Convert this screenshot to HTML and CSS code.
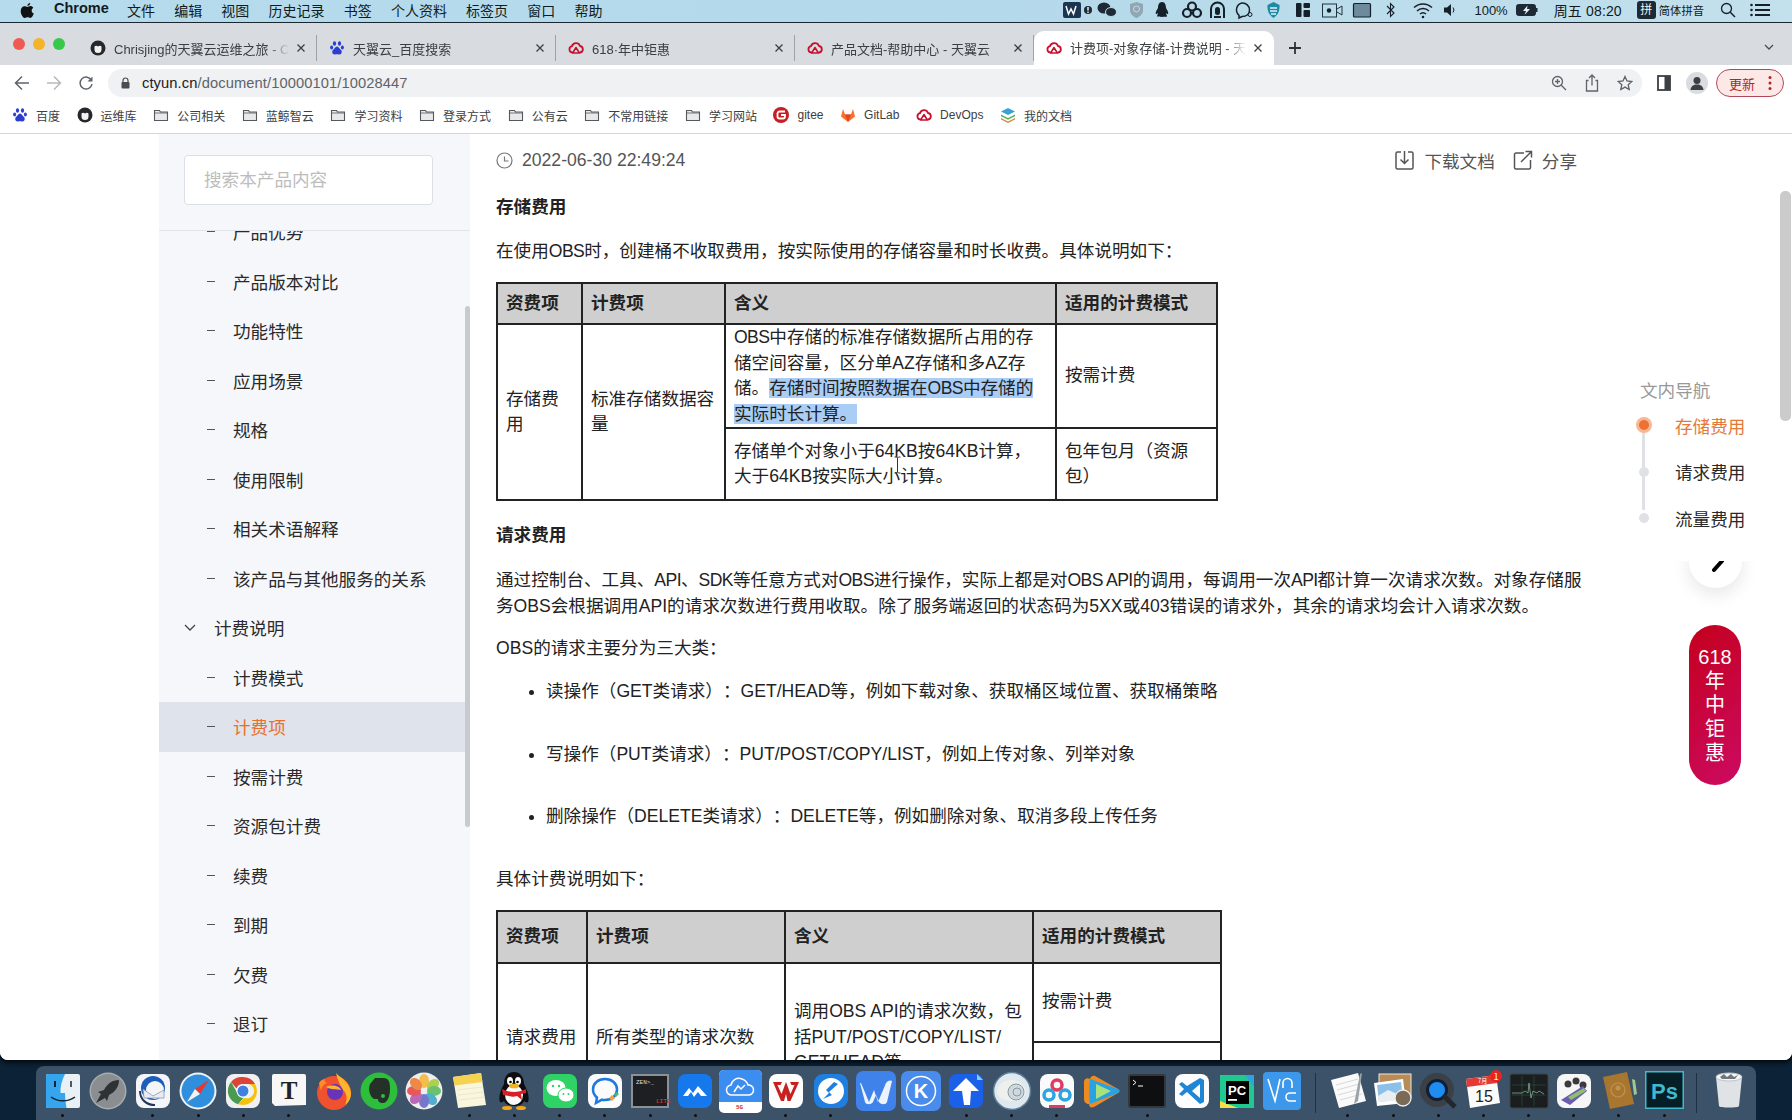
FILE: index.html
```html
<!DOCTYPE html>
<html lang="zh-CN">
<head>
<meta charset="utf-8">
<title>计费项-对象存储-计费说明 - 天翼云</title>
<link rel="stylesheet" href="styles.css">
</head>
<body>
<svg class="defs" aria-hidden="true">
  <symbol id="cloud" viewBox="0 0 16 16"><path d="M4.2 12.5A3.2 3.2 0 0 1 4 6.2 4.2 4.2 0 0 1 12 6a3.3 3.3 0 0 1 .2 6.5" fill="none" stroke="#c8102e" stroke-width="1.8" stroke-linecap="round"/><path d="M8 7.5l3.4 5.5H4.6z" fill="none" stroke="#c8102e" stroke-width="1.5" stroke-linejoin="round"/></symbol>
  <symbol id="folder" viewBox="0 0 16 16"><path d="M1.5 3.5h5l1 1.5h7v8.5h-13z" fill="#e8e9eb" stroke="#55585c" stroke-width="1.1"/><path d="M1.5 6h13" stroke="#55585c" stroke-width=".8"/></symbol>
  <symbol id="paw" viewBox="0 0 16 16"><g fill="#2a3fd0"><ellipse cx="5.5" cy="3.5" rx="1.6" ry="2.2"/><ellipse cx="10.5" cy="3.5" rx="1.6" ry="2.2"/><ellipse cx="2.6" cy="7.5" rx="1.5" ry="2"/><ellipse cx="13.4" cy="7.5" rx="1.5" ry="2"/><path d="M8 6.5c-2 0-2.4 2.5-4 3.6C2.400 11.500 3.500 15 6 14.500c1.200-.3 2.800-.3 4 0 2.500.5 3.600-3 2-4.400-1.600-1.100-2-3.600-4-3.600z"/></g></symbol>
  <symbol id="owl" viewBox="0 0 16 16"><circle cx="8" cy="8" r="7.500" fill="#26282c"/><path d="M4.500 6.500c1-1 2.300-1 3.500 0 1.200-1 2.500-1 3.500 0v3a3.500 3.500 0 0 1-7 0z" fill="#f3f3f3"/></symbol>
  <symbol id="cross" viewBox="0 0 12 12"><path d="M2.500 2.500l7 7m0-7l-7 7" stroke="#3c4043" stroke-width="1.300" fill="none"/></symbol>
</svg>

<header class="menubar">
  <svg class="apple" width="14" height="17" viewBox="0 0 14 17"><path d="M10.200 1c.1 1.200-1 2.900-2.800 2.900C7.300 2.500 8.700 1.100 10.200 1zM7.300 4.900c.8 0 1.700-.8 3.100-.8 1 0 2.200.5 2.900 1.600-2.400 1.500-2 4.700.5 5.800-.7 1.900-2 4.500-3.500 4.500-1 0-1.400-.7-2.700-.7s-1.700.7-2.700.7C3 16 .7 12.300.7 9.200.7 6 2.700 4.200 4.500 4.200c1.200 0 2 .7 2.800.7z" fill="#111"/></svg>
  <nav class="menu">
    <strong class="menu-app">Chrome</strong>
    <span>文件</span><span>编辑</span><span>视图</span><span>历史记录</span><span>书签</span><span>个人资料</span><span>标签页</span><span>窗口</span><span>帮助</span>
  </nav>
  <svg class="status-icons" width="406" height="22" viewBox="1060 0 406 22">
    <rect x="1066" y="3" width="18" height="16" rx="2" fill="#1b3550"/><path d="M1069 7l2.500 8 2.500-5 2.500 5 2.500-8" stroke="#fff" stroke-width="1.500" fill="none"/>
    <circle cx="1091" cy="11" r="4" fill="#1d2a35"/><rect x="1090.300" y="8" width="1.400" height="3.500" fill="#fff"/><rect x="1090.300" y="12.500" width="1.400" height="1.400" fill="#fff"/>
    <ellipse cx="1107" cy="9" rx="6.500" ry="5.500" fill="#1d2a35"/><ellipse cx="1114" cy="13" rx="5.500" ry="4.500" fill="#1d2a35" stroke="#bcdcea"/>
    <path d="M1133 5l6.500-2 6.500 2v6c0 4-3 6.500-6.500 8-3.500-1.500-6.500-4-6.500-8z" fill="#8fa6b3"/><circle cx="1139.500" cy="10" r="3" fill="none" stroke="#c6dae4"/>
    <path d="M1165 3c3 0 4 3 4 6 1 1.500 3 5 2 6-.7.300-1.400-.5-2-1 0 1.500 1 2 1 3.500 0 .5-10 .5-10 0 0-1.500 1-2 1-3.500-.6.500-1.300 1.300-2 1-1-1 1-4.500 2-6 0-3 1-6 4-6z" fill="#15202b"/>
    <g fill="none" stroke="#15202b" stroke-width="2.200"><circle cx="1195" cy="7.500" r="4"/><circle cx="1190" cy="14" r="4"/><circle cx="1200" cy="14" r="4"/></g>
    <path d="M1214 19v-9a6.500 6.500 0 0 1 13 0v9" fill="none" stroke="#15202b" stroke-width="2"/><rect x="1218" y="8" width="5" height="8" rx="2.500" fill="#15202b"/><rect x="1217" y="17" width="7" height="2" fill="#15202b"/>
    <path d="M1245 4a7 7 0 0 1 7.500 7c0 4-3 6.500-7.500 6.500l-3 1.500v-2.800a7 7 0 0 1 3-12.200z" fill="none" stroke="#15202b" stroke-width="1.500"/><circle cx="1253" cy="15.500" r="2" fill="none" stroke="#15202b"/>
    <path d="M1270.500 6l6-3 6 3c.5 6-1.500 10-6 13-4.500-3-6.500-7-6-13z" fill="#1c8ba5"/><path d="M1273 9h7m-7 3h7m-6 3h5" stroke="#e2f2f6" stroke-width="1.300"/>
    <rect x="1299" y="4" width="5.500" height="14" rx="1" fill="#15202b"/><rect x="1306.500" y="4" width="6.500" height="5" rx="1" fill="#15202b"/><rect x="1306.500" y="11" width="6.500" height="7" rx="1" fill="#15202b"/>
    <rect x="1325.500" y="5" width="14" height="13" fill="none" stroke="#22313e"/><circle cx="1332" cy="11.500" r="2.200" fill="#15202b"/><path d="M1340 10l5-3v9l-5-3" fill="none" stroke="#22313e"/>
    <rect x="1356.500" y="4.500" width="17" height="13.500" rx="1" fill="#6f8b9b" stroke="#15202b" stroke-width="1.200"/>
    <path d="M1390 7l7 7-3.500 3.500v-13L1397 8l-7 7" fill="none" stroke="#15202b" stroke-width="1.100"/>
    <g fill="none" stroke="#15202b" stroke-width="1.500"><path d="M1417 8.500a13 13 0 0 1 18 0"/><path d="M1420 12a8.500 8.500 0 0 1 12 0"/><path d="M1423 15a4.500 4.500 0 0 1 6 0"/></g><circle cx="1426" cy="18" r="1.300" fill="#15202b"/>
    <path d="M1447 8.500h3l4-3.500v12l-4-3.500h-3z" fill="#15202b"/><path d="M1456 8.500a4 4 0 0 1 0 5" stroke="#15202b" fill="none"/>
  </svg>
  <div class="status-text">
    <span class="battery-pct">100%</span>
    <svg width="22" height="12" viewBox="0 0 22 12"><rect x=".5" y=".5" width="19" height="11" rx="2" fill="#1d2a35" stroke="#1d2a35"/><path d="M11.500 1.500L7 7h3l-1.500 4L14 5h-3z" fill="#e4f1f6"/><rect x="20" y="4" width="1.500" height="4" fill="#1d2a35"/></svg>
    <span class="clock">周五 08:20</span>
    <span class="ime-box">拼</span>
    <span class="ime-name">简体拼音</span>
    <svg class="status-search" width="16" height="16" viewBox="0 0 16 16"><circle cx="6.500" cy="6.500" r="5" fill="none" stroke="#15202b" stroke-width="1.300"/><path d="M10.300 10.300l4.700 4.700" stroke="#15202b" stroke-width="1.500"/></svg>
    <svg width="20" height="14" viewBox="0 0 20 14"><g fill="#15202b"><circle cx="1.500" cy="2" r="1.300"/><circle cx="1.500" cy="7" r="1.300"/><circle cx="1.500" cy="12" r="1.300"/><rect x="5" y="1" width="15" height="2"/><rect x="5" y="6" width="15" height="2"/><rect x="5" y="11" width="15" height="2"/></g></svg>
  </div>
</header>

<div class="window">
  <div class="tabstrip">
    <div class="lights"><i class="light light-r"></i><i class="light light-y"></i><i class="light light-g"></i></div>
    <div class="tab"><svg class="fav"><use href="#owl"/></svg><span class="tab-title">Chrisjing的天翼云运维之旅 - Chrisjing</span><svg class="close"><use href="#cross"/></svg></div>
    <div class="tab"><svg class="fav"><use href="#paw"/></svg><span class="tab-title">天翼云_百度搜索</span><svg class="close"><use href="#cross"/></svg></div>
    <div class="tab"><svg class="fav"><use href="#cloud"/></svg><span class="tab-title">618·年中钜惠</span><svg class="close"><use href="#cross"/></svg></div>
    <div class="tab"><svg class="fav"><use href="#cloud"/></svg><span class="tab-title">产品文档-帮助中心 - 天翼云</span><svg class="close"><use href="#cross"/></svg></div>
    <div class="tab tab-active"><svg class="fav"><use href="#cloud"/></svg><span class="tab-title">计费项-对象存储-计费说明 - 天翼云</span><svg class="close"><use href="#cross"/></svg></div>
    <svg class="newtab" width="14" height="14" viewBox="0 0 14 14"><path d="M7 1v12M1 7h12" stroke="#2f3235" stroke-width="1.800"/></svg>
    <svg class="tabmenu" width="10" height="6" viewBox="0 0 10 6"><path d="M1 1l4 4 4-4" stroke="#4a4d50" stroke-width="1.300" fill="none"/></svg>
  </div>

  <div class="toolbar">
    <svg class="tool" width="16" height="16" viewBox="0 0 16 16"><path d="M15 8H2m6-6.500L1.500 8 8 14.500" fill="none" stroke="#5f6368" stroke-width="1.500"/></svg>
    <svg class="tool" width="16" height="16" viewBox="0 0 16 16"><path d="M1 8h13M8 1.500L14.500 8 8 14.500" fill="none" stroke="#b6b9bc" stroke-width="1.500"/></svg>
    <svg class="tool" width="16" height="16" viewBox="0 0 16 16"><path d="M13.500 5.500A6 6 0 1 0 14 9" fill="none" stroke="#5f6368" stroke-width="1.500"/><path d="M14.500 1.500v5h-5z" fill="#5f6368"/></svg>
    <div class="omnibox">
      <svg width="9" height="12" viewBox="0 0 9 12"><path d="M2 5V3.500a2.500 2.500 0 0 1 5 0V5" fill="none" stroke="#4a4d50" stroke-width="1.200"/><rect x=".5" y="5" width="8" height="6.500" rx="1" fill="#4a4d50"/></svg>
      <span class="url"><span class="url-host">ctyun.cn</span>/document/10000101/10028447</span>
      <svg class="omni-zoom" width="16" height="16" viewBox="0 0 16 16"><circle cx="6.500" cy="6.500" r="5" fill="none" stroke="#5f6368" stroke-width="1.300"/><path d="M10.300 10.300L15 15M4 6.500h5M6.500 4v5" stroke="#5f6368" stroke-width="1.300"/></svg>
      <svg width="14" height="18" viewBox="0 0 14 18"><path d="M3.500 6.500H1.500v10.500h11V6.500h-2M7 11.500V1.500M4 4l3-3 3 3" fill="none" stroke="#5f6368" stroke-width="1.300"/></svg>
      <svg width="16" height="16" viewBox="0 0 16 16"><path d="M8 1.500l2 4.500 4.800.5-3.600 3.200 1 4.800L8 12.100 3.800 14.500l1-4.800L1.200 6.500 6 6z" fill="none" stroke="#5f6368" stroke-width="1.300"/></svg>
    </div>
    <svg class="panel-icon" width="14" height="16" viewBox="0 0 14 16"><rect x="1" y="1" width="12" height="14" fill="none" stroke="#3c4043" stroke-width="1.800"/><rect x="7.500" y="1" width="5.500" height="14" fill="#3c4043"/></svg>
    <svg class="avatar" width="22" height="22" viewBox="0 0 22 22"><circle cx="11" cy="11" r="11" fill="#dadce0"/><circle cx="11" cy="8.500" r="3.500" fill="#3c4043"/><path d="M4.500 18c.5-4 3-5.500 6.500-5.500s6 1.500 6.500 5.500z" fill="#3c4043"/></svg>
    <div class="update"><span>更新</span><svg width="4" height="16" viewBox="0 0 4 16"><g fill="#b3261e"><circle cx="2" cy="2.500" r="1.500"/><circle cx="2" cy="8" r="1.500"/><circle cx="2" cy="13.500" r="1.500"/></g></svg></div>
  </div>

  <div class="bookmarks">
    <a class="bm"><svg class="bm-i"><use href="#paw"/></svg>百度</a>
    <a class="bm"><svg class="bm-i"><use href="#owl"/></svg>运维库</a>
    <a class="bm"><svg class="bm-i"><use href="#folder"/></svg>公司相关</a>
    <a class="bm"><svg class="bm-i"><use href="#folder"/></svg>蓝鲸智云</a>
    <a class="bm"><svg class="bm-i"><use href="#folder"/></svg>学习资料</a>
    <a class="bm"><svg class="bm-i"><use href="#folder"/></svg>登录方式</a>
    <a class="bm"><svg class="bm-i"><use href="#folder"/></svg>公有云</a>
    <a class="bm"><svg class="bm-i"><use href="#folder"/></svg>不常用链接</a>
    <a class="bm"><svg class="bm-i"><use href="#folder"/></svg>学习网站</a>
    <a class="bm"><svg class="bm-i" viewBox="0 0 16 16"><circle cx="8" cy="8" r="8" fill="#c71d23"/><path d="M12 4.500H6.500a2 2 0 0 0-2 2v3a2 2 0 0 0 2 2H10a2 2 0 0 0 2-2V8H8" fill="none" stroke="#fff" stroke-width="1.800"/></svg>gitee</a>
    <a class="bm"><svg class="bm-i" viewBox="0 0 16 16"><path d="M8 15L1 9.500 3 2l2 5.500h6L13 2l2 7.500z" fill="#fc6d26"/><path d="M8 15L5 7.500h6z" fill="#e24329"/></svg>GitLab</a>
    <a class="bm"><svg class="bm-i"><use href="#cloud"/></svg>DevOps</a>
    <a class="bm"><svg class="bm-i" viewBox="0 0 16 16"><path d="M8 1l7 3.500L8 8 1 4.500z" fill="#3aa0d8"/><path d="M1 7.500L8 11l7-3.500v1.800L8 12.800 1 9.300z" fill="#58b368"/><path d="M1 11l7 3.500 7-3.500v1.500L8 16l-7-3.500z" fill="#e0853a"/></svg>我的文档</a>
  </div>

  <main class="page">
    <aside class="sidebar">
      <div class="search"><div class="search-box">搜索本产品内容</div></div>
      <div class="tree">
        <ul class="tree-list">
          <li class="leaf">产品优势</li>
          <li class="leaf">产品版本对比</li>
          <li class="leaf">功能特性</li>
          <li class="leaf">应用场景</li>
          <li class="leaf">规格</li>
          <li class="leaf">使用限制</li>
          <li class="leaf">相关术语解释</li>
          <li class="leaf">该产品与其他服务的关系</li>
          <li class="group"><svg width="12" height="8" viewBox="0 0 12 8"><path d="M1 1l5 5 5-5" fill="none" stroke="#444" stroke-width="1.300"/></svg>计费说明</li>
          <li class="leaf">计费模式</li>
          <li class="leaf leaf-active">计费项</li>
          <li class="leaf">按需计费</li>
          <li class="leaf">资源包计费</li>
          <li class="leaf">续费</li>
          <li class="leaf">到期</li>
          <li class="leaf">欠费</li>
          <li class="leaf">退订</li>
          <li class="leaf">&nbsp;</li>
        </ul>
        <div class="tree-thumb"></div>
      </div>
    </aside>

    <article class="doc">
      <div class="doc-meta">
        <svg width="17" height="17" viewBox="0 0 17 17"><circle cx="8.500" cy="8.500" r="7.500" fill="none" stroke="#777" stroke-width="1.200"/><path d="M8.500 4.500v4.500h4" fill="none" stroke="#777" stroke-width="1.200"/></svg>
        <span class="doc-date">2022-06-30 22:49:24</span>
        <span class="doc-action doc-action-first"><svg width="21" height="21" viewBox="0 0 21 21"><path d="M7 2H3.500a1.500 1.500 0 0 0-1.500 1.500v14A1.500 1.500 0 0 0 3.500 19h14a1.500 1.500 0 0 0 1.500-1.500v-14A1.500 1.500 0 0 0 17.500 2H14M10.500 1v12M6.500 9.500l4 4 4-4" fill="none" stroke="#555" stroke-width="1.500"/></svg>下载文档</span>
        <span class="doc-action"><svg width="20" height="21" viewBox="0 0 20 21"><path d="M11 3H3a1.500 1.500 0 0 0-1.500 1.500v13A1.500 1.500 0 0 0 3 19h13a1.500 1.500 0 0 0 1.500-1.500V10M8 12L18.500 1.500M12.500 1.500h6v6" fill="none" stroke="#555" stroke-width="1.500"/></svg>分享</span>
      </div>

      <h3 class="doc-h">存储费用</h3>
      <p class="doc-p">在使用<span class="lat">OBS</span>时，创建桶不收取费用，按实际使用的存储容量和时长收费。具体说明如下：</p>

      <table class="grid grid-a">
        <colgroup><col class="a1"><col class="a2"><col class="a3"><col class="a4"></colgroup>
        <thead><tr><th>资费项</th><th>计费项</th><th>含义</th><th>适用的计费模式</th></tr></thead>
        <tbody>
          <tr class="a-r1">
            <td rowspan="2">存储费<br>用</td>
            <td rowspan="2">标准存储数据容<br>量</td>
            <td><span class="lat">OBS</span>中存储的标准存储数据所占用的存<br>储空间容量，区分单AZ存储和多AZ存<br>储。<span class="sel">存储时间按照数据在<span class="lat">OBS</span>中存储的<br>实际时长计算。</span></td>
            <td>按需计费</td>
          </tr>
          <tr class="a-r2">
            <td>存储单个对象小于64KB按64KB计算，<br>大于64KB按实际大小计算。</td>
            <td>包年包月（资源<br>包）</td>
          </tr>
        </tbody>
      </table>

      <h3 class="doc-h doc-h-second">请求费用</h3>
      <p class="doc-p doc-p-wrap">通过控制台、工具、<span class="lat">API</span>、<span class="lat">SDK</span>等任意方式对<span class="lat">OBS</span>进行操作，实际上都是对<span class="lat">OBS API</span>的调用，每调用一次<span class="lat">API</span>都计算一次请求次数。对象存储服<br>务OBS会根据调用API的请求次数进行费用收取。除了服务端返回的状态码为5XX或403错误的请求外，其余的请求均会计入请求次数。</p>
      <p class="doc-p doc-p-tight">OBS的请求主要分为三大类：</p>
      <ul class="doc-list">
        <li>读操作（GET类请求）：GET/HEAD等，例如下载对象、获取桶区域位置、获取桶策略</li>
        <li>写操作（PUT类请求）：PUT/POST/COPY/LIST，例如上传对象、列举对象</li>
        <li>删除操作（DELETE类请求）：DELETE等，例如删除对象、取消多段上传任务</li>
      </ul>
      <p class="doc-p doc-p-last">具体计费说明如下：</p>

      <table class="grid grid-b">
        <colgroup><col class="b1"><col class="b2"><col class="b3"><col class="b4"></colgroup>
        <thead><tr><th>资费项</th><th>计费项</th><th>含义</th><th>适用的计费模式</th></tr></thead>
        <tbody>
          <tr class="b-r1">
            <td rowspan="2">请求费用</td>
            <td rowspan="2">所有类型的请求次数</td>
            <td rowspan="2">调用OBS API的请求次数，包<br>括PUT/POST/COPY/LIST/<br>GET/HEAD等</td>
            <td>按需计费</td>
          </tr>
          <tr class="b-r2"><td>包年包月</td></tr>
        </tbody>
      </table>
    </article>

    <div class="float-circle"><svg width="18" height="30" viewBox="0 0 18 30"><path d="M15 2l-8 9" stroke="#000" stroke-width="4" stroke-linecap="round" fill="none"/></svg></div>
    <aside class="toc">
      <div class="toc-title">文内导航</div>
      <ul class="toc-list">
        <li class="toc-item toc-on"><i class="toc-dot"></i>存储费用</li>
        <li class="toc-item"><i class="toc-dot"></i>请求费用</li>
        <li class="toc-item"><i class="toc-dot"></i>流量费用</li>
      </ul>
    </aside>
    <div class="promo"><span>618</span><span>年</span><span>中</span><span>钜</span><span>惠</span></div>
    <div class="page-thumb"></div>
    <svg class="ibeam" width="9" height="18" viewBox="0 0 9 18"><path d="M1.500 1h2l1 1 1-1h2M4.500 2v14M1.500 17h2l1-1 1 1h2" fill="none" stroke="#333" stroke-width="1"/></svg>
  </main>
</div>

<footer class="dock">
  <div class="dk on"><svg viewBox="0 0 40 40"><rect x="3" y="3" width="34" height="34" rx="2" fill="#e9f0f6"/><path d="M3 5a2 2 0 0 1 2-2h17c-3 6-5 13-4.500 19H22c0 5 .5 10 1.500 15H5a2 2 0 0 1-2-2z" fill="#35a5ee"/><rect x="11" y="10" width="2" height="6" fill="#123"/><rect x="27" y="10" width="2" height="6" fill="#556"/><path d="M8 26c7 5 17 5 24 0" stroke="#123" stroke-width="1.500" fill="none"/></svg><i></i></div>
  <div class="dk"><svg viewBox="0 0 40 40"><circle cx="20" cy="20" r="18.500" fill="#a9adb0"/><circle cx="20" cy="20" r="17" fill="#8a8e90"/><path d="M31 9c-7 0-12 4-15 10l-6 2 3 2-5 9 9-5 2 3 2-6c6-3 10-8 10-15z" fill="#2f3234"/></svg></div>
  <div class="dk on"><svg viewBox="0 0 40 40"><rect x="3" y="3" width="34" height="34" rx="8" fill="#f4f5f8"/><circle cx="20" cy="17" r="12" fill="#1d5fb8"/><circle cx="22" cy="19" r="9" fill="#f4f5f8"/><path d="M10 18l10 7 11-6v8H11z" fill="#e8ebf2" stroke="#7c8aa0" stroke-width=".7"/><path d="M7 20c0 9 7 14 15 14" stroke="#24345c" stroke-width="2" fill="none"/></svg><i></i></div>
  <div class="dk on"><svg viewBox="0 0 40 40"><circle cx="20" cy="20" r="18.500" fill="#f0f3f6"/><circle cx="20" cy="20" r="16.500" fill="#2f8fdc"/><path d="M31 9L17 18l5 5z" fill="#e6382f"/><path d="M9 31l8-13 5 5z" fill="#f2f2f2"/></svg><i></i></div>
  <div class="dk on"><svg viewBox="0 0 40 40"><rect x="3" y="3" width="34" height="34" rx="8" fill="#f0f0f0"/><path d="M20 6a14 14 0 0 1 12.100 7H20a7 7 0 0 0-6.500 4.400L8 11a14 14 0 0 1 12-5z" fill="#db4437"/><path d="M8 11l6 10.500a7 7 0 0 0 6.500 5.500L15 33.300A14 14 0 0 1 8 11z" fill="#4a9b4f"/><path d="M32.100 13A14 14 0 0 1 20 34l-5-.700 6.200-6.400a7 7 0 0 0 5-13.900z" fill="#f4c20d"/><circle cx="20" cy="20" r="6.500" fill="#fff"/><circle cx="20" cy="20" r="5.500" fill="#3f7fe0"/></svg><i></i></div>
  <div class="dk on"><svg viewBox="0 0 40 40"><path d="M6 35l31-1V5a2 2 0 0 0-2-2H5a2 2 0 0 0-2 2v27z" fill="#f7f7f7"/><text x="20" y="28" class="dk-serif">T</text></svg><i></i></div>
  <div class="dk"><svg viewBox="0 0 40 40"><circle cx="20" cy="22" r="17" fill="#f0512f"/><path d="M22 2c3 4 14 8 15 20 0 6-3 10-6 12 3-6 2-13-4-17-1-5-4-9-5-15z" fill="#fcb52a"/><path d="M5 12c2-3 4-4 6-4-1 2 0 3 2 4-3 1-5 3-6 8z" fill="#ff8a26"/><circle cx="21" cy="21" r="8" fill="#6a34b8"/><path d="M12 16c6-3 14-1 15 3-5-1-10 0-15-3z" fill="#f8b432"/></svg></div>
  <div class="dk"><svg viewBox="0 0 40 40"><circle cx="20" cy="20" r="18.500" fill="#2dbe3c"/><path d="M11 13l5-6h8c6 0 7 4 7 11 0 8-3 14-7 14-4 0-5-2-5-4h-3c-4 0-6-7-6-11z" fill="#243028"/><circle cx="24" cy="25" r="2" fill="#2dbe3c"/></svg></div>
  <div class="dk"><svg viewBox="0 0 40 40"><circle cx="20" cy="20" r="18.500" fill="#eeeef0"/><g opacity=".9"><ellipse cx="20" cy="10" rx="5" ry="7" fill="#f4b93a"/><ellipse cx="29" cy="14" rx="5" ry="7" fill="#a6ce3a" transform="rotate(45 29 14)"/><ellipse cx="30" cy="20" rx="7" ry="5" fill="#5fbd5f"/><ellipse cx="27" cy="28" rx="5" ry="7" fill="#3fa9c9" transform="rotate(-45 27 28)"/><ellipse cx="20" cy="30" rx="5" ry="7" fill="#6a6ac6"/><ellipse cx="12" cy="27" rx="5" ry="7" fill="#b65bb1" transform="rotate(45 12 27)"/><ellipse cx="10" cy="20" rx="7" ry="5" fill="#e8474c"/><ellipse cx="12" cy="13" rx="5" ry="7" fill="#ef7d34" transform="rotate(-45 12 13)"/></g></svg></div>
  <div class="dk on"><svg viewBox="0 0 40 40"><path d="M4 6l28-4 5 32-28 3z" fill="#faf6dd"/><path d="M4 6l28-4 1.500 9-28 3.500z" fill="#f5d252"/><path d="M8 19l26-3M9 24l26-3M10 29l26-3" stroke="#e4e0c4" stroke-width=".7"/></svg><i></i></div>
  <div class="dk on"><svg viewBox="0 0 40 40"><path d="M20 1c7 0 10 6 10 12 3 5 6 13 4 18-1 1-3 0-4-1-1 3-5 5-10 5s-9-2-10-5c-1 1-3 2-4 1-2-5 1-13 4-18 0-6 3-12 10-12z" fill="#0e0e10"/><ellipse cx="20" cy="24" rx="9" ry="10" fill="#fafafa"/><ellipse cx="16" cy="10" rx="3" ry="4" fill="#fff"/><ellipse cx="24" cy="10" rx="3" ry="4" fill="#fff"/><circle cx="16.500" cy="11" r="1.300" fill="#000"/><circle cx="23.500" cy="11" r="1.300" fill="#000"/><ellipse cx="20" cy="15" rx="5" ry="2.300" fill="#f3b21d"/><path d="M8 18c8 4 16 4 24 0v4l-5 1 1 6-5-4c-3 1-5 1-8 0l-6-1z" fill="#d61f26"/><ellipse cx="13" cy="37" rx="5" ry="2" fill="#f2a71b"/><ellipse cx="27" cy="37" rx="5" ry="2" fill="#f2a71b"/></svg><i></i></div>
  <div class="dk on"><svg viewBox="0 0 40 40"><rect x="3" y="3" width="34" height="34" rx="8" fill="#2fd365"/><ellipse cx="16" cy="17" rx="9.500" ry="8" fill="#fff"/><ellipse cx="26" cy="24" rx="8" ry="7" fill="#fff" stroke="#2fd365"/><circle cx="13" cy="15" r="1.200" fill="#2fd365"/><circle cx="19" cy="15" r="1.200" fill="#2fd365"/><circle cx="23.500" cy="23" r="1" fill="#2fd365"/><circle cx="28.500" cy="23" r="1" fill="#2fd365"/></svg><i></i></div>
  <div class="dk on"><svg viewBox="0 0 40 40"><rect x="3" y="3" width="34" height="34" rx="8" fill="#fbfbfc"/><path d="M20 8c7 0 12 4.500 12 10.500S27 29 20 29c-1 0-2 0-3-.3L11 32l1-5.500C9.500 24.500 8 22 8 18.500 8 12.500 13 8 20 8z" fill="none" stroke="#1f78e0" stroke-width="2.500"/><path d="M24 27l3-3 3 3-3 3z" fill="#f0a23b"/><path d="M29 24l3-3 2 2-3 3z" fill="#3fbf6b"/></svg><i></i></div>
  <div class="dk on"><svg viewBox="0 0 40 40"><rect x="1" y="3" width="38" height="34" fill="#8b9196"/><rect x="3" y="5" width="34" height="30" fill="#1d1f22"/><text x="6" y="13" class="dk-tiny">ZEN&gt;_</text><text x="26" y="32" class="dk-tiny dk-tiny-red">LITE</text></svg><i></i></div>
  <div class="dk on"><svg viewBox="0 0 40 40"><rect x="3" y="3" width="34" height="34" rx="8" fill="#1578ec"/><path d="M8 25l6-8 4 5 5-7 9 10h-6l-3-4-4 5-3-5-3 4z" fill="#fff"/></svg><i></i></div>
  <div class="dk"><svg viewBox="0 0 40 40"><rect x="-1" y="-1" width="43" height="43" rx="5" fill="#fff"/><path d="M-1 4a5 5 0 0 1 5-5h33a5 5 0 0 1 5 5v27h-43z" fill="#3b8def"/><path d="M12 24a5 5 0 0 1-1-10c1-5 6-8 11-6 3 1 5 3 6 6a5 5 0 0 1 1 10z" fill="none" stroke="#fff" stroke-width="1.500"/><path d="M14 21l4-6 3 3 4-4" stroke="#fff" stroke-width="1.500" fill="none"/><text x="16" y="38" class="dk-tiny dk-tiny-red">5G</text></svg></div>
  <div class="dk on"><svg viewBox="0 0 40 40"><rect x="3" y="3" width="34" height="34" rx="8" fill="#fdfdfd"/><path d="M7 11h9l-1.500 3h-3l4 9 4.500-12 4.500 12 4-9h-3L24 11h9l-8.500 19h-3L20 23l-2 7h-3z" fill="#c8201f"/></svg><i></i></div>
  <div class="dk on"><svg viewBox="0 0 40 40"><rect x="3" y="3" width="34" height="34" rx="9" fill="#1e7fe0"/><circle cx="20" cy="20" r="13" fill="#fff"/><path d="M23 11l-8 8 3 3-6 6 9-4-3-3 9-8z" fill="#1e7fe0"/></svg><i></i></div>
  <div class="dk"><svg viewBox="0 0 40 40"><rect y="0" width="40" height="40" rx="7" fill="#3f83ea"/><path d="M5 12l8 19 5-12 4 12 8-19c2-3 5-3 6-2l-5 21c-1 3-6 3-8 0l-3-7-3 7c-2 3-7 3-8 0L4 12z" fill="#fff" opacity=".9"/></svg></div>
  <div class="dk"><svg viewBox="0 0 40 40"><rect y="0" width="40" height="40" rx="7" fill="#4a8ceb"/><circle cx="20" cy="20" r="14.500" fill="none" stroke="#fff" stroke-width="1.500"/><text x="20" y="27" class="dk-bold">K</text></svg></div>
  <div class="dk on"><svg viewBox="0 0 40 40"><rect x="3" y="3" width="34" height="34" rx="7" fill="#1a60e8"/><path d="M31 3l6 6h-6z" fill="#7fd0f3"/><path d="M20 7L33 20h-8l-1 14h-6l-2-14H7z" fill="#fff"/></svg><i></i></div>
  <div class="dk on"><svg viewBox="0 0 40 40"><circle cx="20" cy="20" r="18.500" fill="#dfe8ef" stroke="#5a7d99" stroke-width="1.500"/><path d="M5 22c0-9 7-13 14-13s15 5 15 13c-4 8-8 8-13 8C13 30 7 28 5 22z" fill="#eef0ee"/><circle cx="24" cy="21" r="8" fill="#cfd8dc" stroke="#8a9aa4"/><circle cx="25" cy="21" r="4" fill="none" stroke="#8a9aa4"/></svg><i></i></div>
  <div class="dk on"><svg viewBox="0 0 40 40"><rect x="3" y="3" width="34" height="34" rx="8" fill="#fafafa"/><g fill="none" stroke-width="3.500"><circle cx="20" cy="14" r="5" stroke="#e33a5f"/><circle cx="12" cy="24" r="5" stroke="#2da5e0"/><circle cx="28" cy="24" r="5" stroke="#2da5e0"/></g><rect x="12" y="34" width="16" height="3" fill="#e33a5f"/></svg><i></i></div>
  <div class="dk"><svg viewBox="0 0 40 40"><path d="M2 11c0-3 3-5 6-3 0-2 3-4 5-3l23 13c2 1 2 3 0 4L12 36c-3 1-5 0-5-3-3 0-5-2-5-5z" fill="#ee8a20"/><path d="M8 8l28 10c2 1 2 3 0 4L8 33c-1-8-1-17 0-25z" fill="#27a3e3"/><path d="M14 13l15 7-15 8z" fill="#a9e27c"/></svg></div>
  <div class="dk on"><svg viewBox="0 0 40 40"><rect x="1" y="3" width="38" height="34" rx="3" fill="#34373b"/><rect x="3" y="5" width="34" height="30" rx="1" fill="#0e0f11"/><path d="M6 9l3 2.500-3 2.500" stroke="#fff" fill="none"/><path d="M11 15h5" stroke="#fff"/></svg><i></i></div>
  <div class="dk"><svg viewBox="0 0 40 40"><rect x="3" y="3" width="34" height="34" rx="8" fill="#fdfdfd"/><path d="M28 7l4 2v22l-4 2-13-12-5 4-3-2 5-5-5-5 3-2 5 4z" fill="#1f86d6"/><path d="M28 13l-8 7 8 7z" fill="#fdfdfd"/></svg></div>
  <div class="dk"><svg viewBox="0 0 40 40"><rect x="3" y="4" width="34" height="33" fill="#1fc98f"/><path d="M28 4h9v12z" fill="#2fa3dd"/><path d="M3 30v7h18z" fill="#f3e04a"/><rect x="9" y="10" width="23" height="23" fill="#000"/><text x="11" y="24" class="dk-pc">PC</text><rect x="11" y="28" width="9" height="1.800" fill="#fff"/></svg></div>
  <div class="dk"><svg viewBox="0 0 40 40"><rect y="1" width="38" height="38" rx="4" fill="#3d97ea"/><path d="M5 8l7 22 5-22" fill="none" stroke="#fff" stroke-width="1.600"/><path d="M20 17v-5a4.500 4.500 0 0 1 9 0v5M33 22h-6a4 4 0 0 0 0 8h6" fill="none" stroke="#fff" stroke-width="1.600"/></svg></div>
  <div class="dk-sep"><span></span></div>
  <div class="dk on"><svg viewBox="0 0 40 40"><path d="M3 9L30 2l8 28-27 7z" fill="#fafafa"/><path d="M8 14l22-6M9 19l22-6M10 24l22-6M12 29l22-6" stroke="#c9c9c9" stroke-width=".7"/><path d="M32 3l2-1-4 28 -4 3z" fill="#9aa3a8"/></svg><i></i></div>
  <div class="dk on"><svg viewBox="0 0 40 40"><rect x="6" y="3" width="32" height="24" fill="#b88c58" stroke="#efe6d8"/><path d="M1 12L30 8l3 24-29 3z" fill="#fff"/><path d="M4 14l24-3 2 17-24 3z" fill="#8cc0e8"/><path d="M5 25l10-6 14 6 1 4-24 2z" fill="#e8eef2"/><circle cx="30" cy="27" r="8" fill="#7b6a55" stroke="#eee" stroke-width="1.300"/></svg><i></i></div>
  <div class="dk on"><svg viewBox="0 0 40 40"><circle cx="19" cy="19" r="17" fill="#3a4045"/><circle cx="19" cy="19" r="9.500" fill="#1f8df0" stroke="#0e1e36" stroke-width="3"/><path d="M25 24l12 12" stroke="#22272b" stroke-width="5"/></svg><i></i></div>
  <div class="dk on"><svg viewBox="0 0 40 40"><path d="M3 8l30-4 4 28-30 5z" fill="#fbfbfb"/><path d="M3 8l30-4 1 8-30 4z" fill="#e23b34"/><text x="15" y="12" class="dk-tiny dk-tiny-white">7月</text><text x="21" y="31" class="dk-num">15</text><circle cx="33" cy="5" r="6" fill="#e5261f"/><text x="33" y="8.500" class="dk-tiny dk-tiny-white dk-mid">1</text></svg><i></i></div>
  <div class="dk on"><svg viewBox="0 0 40 40"><rect x="1" y="3" width="38" height="34" rx="2" fill="#1b1e1f" stroke="#3d4244"/><path d="M3 14h34M3 24h34M13 5v30M25 5v30" stroke="#2f4a3c" stroke-width=".7"/><path d="M3 22h10l3-2 3 2 1-10 2 15 2-7 4 2 2-2 5 3" stroke="#7fae90" fill="none" stroke-width=".8"/></svg><i></i></div>
  <div class="dk on"><svg viewBox="0 0 40 40"><rect x="3" y="3" width="34" height="34" rx="8" fill="#f6f6f6"/><circle cx="14" cy="13" r="3.500" fill="#3a3a3e"/><circle cx="22" cy="10" r="3.500" fill="#3a3a3e"/><circle cx="29" cy="14" r="3.500" fill="#3a3a3e"/><path d="M7 29l22-14 4 5-17 14z" fill="#6b5cb0"/><path d="M14 26l16-9 2 3-15 9z" fill="#8ec06c"/></svg><i></i></div>
  <div class="dk on"><svg viewBox="0 0 40 40"><path d="M4 6L28 1l7 32-24 5z" fill="#a9762f"/><circle cx="19" cy="19" r="7" fill="none" stroke="#c09450" stroke-width="1.200"/><circle cx="19" cy="17" r="2.500" fill="#c09450"/><path d="M33 8l3 1 2 14-3 1z" fill="#9fc88a"/></svg><i></i></div>
  <div class="dk on"><svg viewBox="0 0 40 40"><rect x="1" y="0" width="39" height="38" fill="#3fb9d0"/><rect x="2.500" y="1.500" width="36" height="35" fill="#061e26"/><text x="20.500" y="28" class="dk-ps">Ps</text></svg><i></i></div>
  <div class="dk-sep"><span></span></div>
  <div class="dk"><svg viewBox="0 0 40 40"><path d="M7 6h26l-3 29c0 2-20 2-20 0z" fill="#dfe3e6"/><ellipse cx="20" cy="6" rx="13" ry="4" fill="#f4f6f7" stroke="#bfc4c8"/><path d="M11 6l4-3 3 3 4-3 3 3 4-2-3 4H13z" fill="#70767c"/></svg></div>
</footer>
</body>
</html>
```
FILE: styles.css
```css
* { box-sizing: border-box; }
html, body { margin: 0; padding: 0; }
body {
  width: 1792px;
  height: 1120px;
  overflow: hidden;
  background: #0c2236;
  color: #222;
  font-family: "Liberation Sans", "Noto Sans CJK SC", sans-serif;
  text-spacing-trim: space-all;
}
ul { list-style: none; margin: 0; padding: 0; }
.defs { display: none; }

/* macOS menu bar */
.menubar {
  height: 23px;
  display: flex;
  align-items: center;
  padding: 0 22px 2px 20px;
  background: linear-gradient(90deg, #b6dbec, #b4d9ea 55%, #c3e0ec);
  border-bottom: 1px solid #1c2a33;
  font-size: 14px;
  color: #121a20;
}
.apple { flex: none; }
.menu { display: flex; gap: 19.200px; margin-left: 20px; }
.menu-app { font-size: 14.500px; margin-right: -1px; }
.status-icons { margin-left: auto; flex: none; }
.status-text { display: flex; align-items: center; margin-left: 11px; }
.battery-pct { font-size: 13px; margin-right: 8px; }
.clock { font-size: 14px; margin-left: 16px; margin-right: 15px; letter-spacing: .15px; }
.ime-box { width: 19px; height: 18px; background: #1d2a35; color: #e9f3f7; border-radius: 3px; font-size: 12px; line-height: 18px; text-align: center; }
.ime-name { font-size: 11.300px; margin-left: 3px; }
.status-search { margin: 0 14px 0 16px; }

/* browser window */
.window {
  position: relative;
  height: 1037px;
  background: #fff;
  border-radius: 0 0 8px 8px;
  overflow: hidden;
  box-shadow: 0 3px 4px rgba(0,0,0,.7);
}
.tabstrip {
  height: 42px;
  background: #d8dbdf;
  display: flex;
  align-items: flex-end;
}
.lights { width: 78px; height: 100%; display: flex; align-items: center; gap: 8px; padding: 0 0 0 13px; }
.light { width: 12px; height: 12px; border-radius: 50%; }
.light-r { background: #ee5a52; }
.light-y { background: #f3b32a; }
.light-g { background: #35c849; }
.tab {
  width: 239px;
  height: 26px;
  display: flex;
  align-items: center;
  padding: 0 9px 0 12px;
  font-size: 13px;
  color: #3c4043;
  position: relative;
  border-right: 1px solid #9fa3a8;
  margin-bottom: 4px;
}
.tab-active {
  width: 240px;
  height: 34px;
  margin: 0;
  background: #fff;
  border: 0;
  border-radius: 10px 10px 0 0;
  padding: 0 10px 1px 12px;
}
.fav { width: 16px; height: 16px; flex: none; margin-right: 8px; }
.tab-title { flex: 1; min-width: 0; white-space: nowrap; overflow: hidden; -webkit-mask-image: linear-gradient(90deg, #000 88%, transparent); mask-image: linear-gradient(90deg, #000 88%, transparent); }
.close { width: 12px; height: 12px; flex: none; margin-left: 6px; }
.newtab { margin: 0 0 10px 14px; flex: none; }
.tabmenu { margin: 0 18px 15px auto; flex: none; }

.toolbar {
  height: 37px;
  display: flex;
  align-items: center;
  padding: 0 8px 1px 14px;
  background: #fff;
}
.tool { flex: none; margin-right: 16px; }
.omnibox {
  flex: 1;
  height: 28px;
  margin-left: -2px;
  display: flex;
  align-items: center;
  gap: 18px;
  padding: 0 9px 0 13px;
  border-radius: 14px;
  background: #eff1f3;
  color: #5f6368;
  font-size: 14.700px;
}
.url { margin-left: -6px; letter-spacing: .1px; }
.url-host { color: #202124; }
.omni-zoom { margin-left: auto; }
.panel-icon { margin: 0 15px 0 15px; flex: none; }
.avatar { flex: none; }
.update {
  margin-left: 8px;
  width: 68px;
  height: 28px;
  display: flex;
  align-items: center;
  justify-content: space-between;
  padding: 0 11px 0 12px;
  border: 1px solid #b3475a;
  border-radius: 14px;
  background: #fce8e6;
  color: #b3261e;
  font-size: 13px;
}

.bookmarks {
  height: 32px;
  display: flex;
  align-items: center;
  gap: 16.600px;
  padding: 0 0 5px 12px;
  background: #fff;
  border-bottom: 1px solid #d5d7da;
  font-size: 12px;
  color: #3c4043;
}
.bm { display: flex; align-items: center; gap: 8px; white-space: nowrap; }
.bm-i { width: 16px; height: 16px; flex: none; }

/* page */
.page {
  position: relative;
  height: 926px;
  display: flex;
  padding-left: 159px;
  overflow: hidden;
  background: #fff;
  font-size: 17.600px;
}
.sidebar {
  flex: none;
  width: 311px;
  height: 100%;
  background: #f5f7fb;
  display: flex;
  flex-direction: column;
}
.search {
  flex: none;
  height: 97px;
  padding: 21px 37px 0 25px;
  border-bottom: 1px solid #e1e4ea;
}
.search-box {
  height: 50px;
  padding: 0 19px;
  line-height: 48px;
  background: #fff;
  border: 1px solid #dcdfe6;
  border-radius: 4px;
  color: #bdbdbd;
}
.tree { position: relative; flex: 1; min-height: 0; overflow: hidden; }
.tree-list { margin-top: -24px; width: 306px; }
.leaf, .group { height: 49.500px; display: flex; align-items: center; color: #2a2a2a; white-space: nowrap; }
.leaf { padding-left: 48px; }
.leaf::before { content: ""; width: 8px; height: 1px; background: #555; margin-right: 18px; flex: none; }
.leaf-active { background: #dfe3ec; color: #e8702a; }
.group { padding-left: 25px; }
.group svg { margin-right: 18px; flex: none; }
.tree-thumb { position: absolute; right: 0; top: 75px; width: 5px; height: 521px; border-radius: 3px; background: #c9cacd; }

.doc { flex: none; width: 1096px; margin-left: 26px; padding-top: 13px; }
.doc-meta { display: flex; align-items: center; height: 26px; width: 1081px; color: #555; }
.doc-date { margin-left: 9px; }
.doc-action { display: inline-flex; align-items: center; gap: 9px; margin-left: 18px; }
.doc-action-first { margin-left: auto; }
.doc-h { margin: 21.500px 0 0; font-size: 17.600px; line-height: 25px; font-weight: 700; color: #222; }
.doc-h-second { margin-top: 21.500px; }
.doc-p { margin: 19px 0 0; line-height: 25px; white-space: nowrap; color: #222; }
.doc-p-wrap { margin-top: 19.500px; line-height: 26px; }
.doc-p-tight { margin-top: 16px; line-height: 26px; }
.doc-p-last { margin-top: 19px; line-height: 26px; }
.lat { letter-spacing: -.6px; }
.doc-list { list-style: disc; padding-left: 50px; margin-top: 17px; }
.doc-list li { line-height: 26px; margin-bottom: 36.500px; white-space: nowrap; }

.grid { border-collapse: collapse; table-layout: fixed; margin-top: 18.500px; color: #222; }
.grid th, .grid td { border: 2px solid #222; padding: 0 8px; line-height: 25.500px; text-align: left; white-space: nowrap; overflow: hidden; }
.grid th { background: #cfcfcf; font-weight: 700; }
.grid-a { width: 720px; }
.a1 { width: 85px; } .a2 { width: 143px; } .a3 { width: 331px; } .a4 { width: 161px; }
.grid-a thead tr { height: 41px; }
.a-r1 { height: 102px; }
.a-r2 { height: 72px; }
.sel { background: #a9cdf5; }
.grid-b { width: 724px; margin-top: 18px; }
.b1 { width: 90px; } .b2 { width: 198px; } .b3 { width: 248px; } .b4 { width: 188px; }
.grid-b thead tr { height: 52px; }
.b-r1 { height: 79px; }
.b-r2 { height: 71px; }

/* overlays on the page */
.toc {
  position: absolute;
  left: 1620px;
  top: 240px;
  width: 160px;
  height: 187px;
  background: #fff;
  padding: 4px 0 0 20px;
}
.toc-title { color: #999; line-height: 26px; height: 24px; }
.toc-list { position: relative; }
.toc-list::before { content: ""; position: absolute; left: 1.500px; top: 15px; width: 3px; height: 93px; background: #dfe1e5; }
.toc-item { position: relative; height: 46.500px; padding-left: 35px; display: flex; align-items: center; color: #2a2a2a; }
.toc-dot { position: absolute; left: -2.500px; top: 18px; width: 10px; height: 10px; margin: 0 0 0 1px; border-radius: 50%; background: #dfe1e5; }
.toc-on { color: #e5793a; }
.toc-on .toc-dot { background: #ee7035; box-shadow: 0 0 0 3px #f6b894; }
.float-circle {
  position: absolute;
  left: 1689px;
  top: 402px;
  width: 53px;
  height: 52px;
  border-radius: 50%;
  background: #fff;
  box-shadow: 0 6px 18px rgba(0,0,0,.1);
  padding: 23px 0 0 18px;
}
.float-circle svg { display: block; }
.promo {
  position: absolute;
  left: 1689px;
  top: 491px;
  width: 52px;
  height: 160px;
  padding-top: 20px;
  border-radius: 26px;
  background: linear-gradient(135deg, #c4001c, #cc0a62);
  color: #fff;
  font-size: 20px;
  line-height: 24px;
  display: flex;
  flex-direction: column;
  align-items: center;
}
.page-thumb { position: absolute; left: 1780px; top: 57px; width: 11px; height: 230px; border-radius: 5px; background: #cbcbcb; }
.ibeam { position: absolute; left: 893px; top: 322px; }

/* dock */
.dock {
  display: flex;
  align-items: flex-start;
  width: 1720px;
  height: 54px;
  margin: 6px 0 0 36px;
  padding: 5px 0 0 4px;
  background: #3c5269;
  border-radius: 8px 8px 0 0;
}
.dk { position: relative; flex: none; width: 45.200px; height: 49px; }
.dk svg { display: block; width: 40px; height: 40px; margin: 0 auto; overflow: visible; }
.dk i { display: none; }
.dk.on i { display: block; width: 3px; height: 3px; margin: 3px auto 0; border-radius: 50%; background: #0c0c0c; }
.dk-sep { flex: none; width: 20px; height: 49px; display: flex; justify-content: center; padding-top: 2px; }
.dk-sep span { width: 1px; height: 40px; background: #1f3042; }
.dk-serif { font: 700 25px "Liberation Serif", serif; text-anchor: middle; fill: #222; }
.dk-tiny { font: 6px "Liberation Mono", monospace; fill: #ddd; }
.dk-tiny-red { fill: #d0302c; font-weight: 700; }
.dk-tiny-white { fill: #fff; font-family: "Noto Sans CJK SC", sans-serif; }
.dk-mid { text-anchor: middle; font-size: 9px; }
.dk-bold { font: 700 20px "Liberation Sans", sans-serif; text-anchor: middle; fill: #fff; }
.dk-pc { font: 700 13px "Liberation Sans", sans-serif; fill: #fff; }
.dk-num { font: 16px "Liberation Sans", sans-serif; text-anchor: middle; fill: #222; }
.dk-ps { font: 700 22px "Liberation Sans", sans-serif; text-anchor: middle; fill: #3fb9d0; }
```
